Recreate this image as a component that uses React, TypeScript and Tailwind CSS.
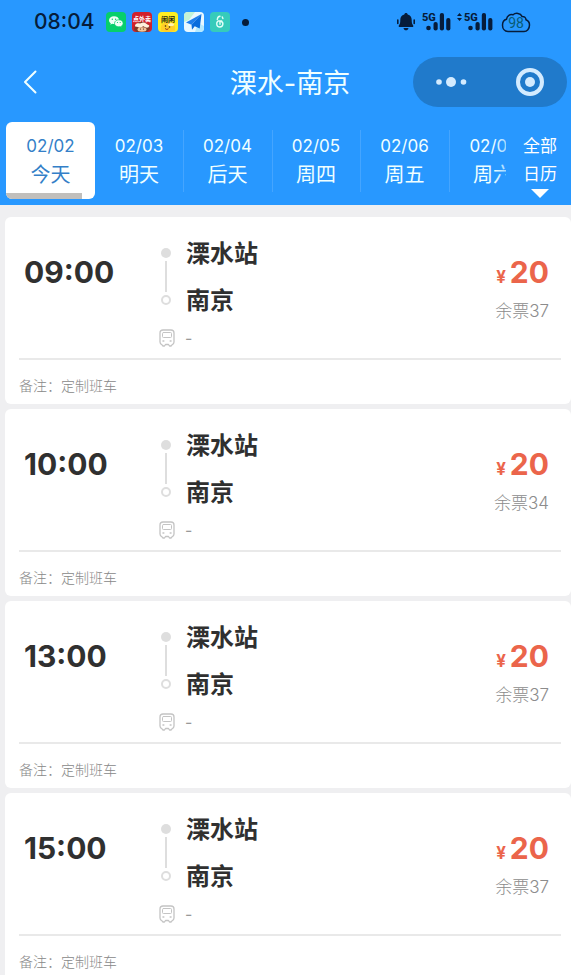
import React from "react";

type Day = { date: string; label: string };
type Trip = { time: string; from: string; to: string; price: number; left: number };

const days: Day[] = [
  { date: "02/02", label: "今天" },
  { date: "02/03", label: "明天" },
  { date: "02/04", label: "后天" },
  { date: "02/05", label: "周四" },
  { date: "02/06", label: "周五" },
  { date: "02/07", label: "周六" },
];

const trips: Trip[] = [
  { time: "09:00", from: "溧水站", to: "南京", price: 20, left: 37 },
  { time: "10:00", from: "溧水站", to: "南京", price: 20, left: 34 },
  { time: "13:00", from: "溧水站", to: "南京", price: 20, left: 37 },
  { time: "15:00", from: "溧水站", to: "南京", price: 20, left: 37 },
];

function AppIcons() {
  return (
    <div className="flex gap-[6px]">
      <svg width="20" height="20" viewBox="0 0 20 20">
        <rect width="20" height="20" rx="4" fill="#07cf6b" />
        <path d="M8 4.2c-2.9 0-5 1.7-5 4 0 1.300.7 2.300 1.800 3l-.5 1.600 1.900-1c.6.2 1.200.2 1.800.2 2.900 0 5-1.700 5-3.900S10.900 4.200 8 4.200z" fill="#effff5" />
        <path d="M12.800 7.800c-2.400 0-4.300 1.500-4.300 3.500s1.900 3.500 4.300 3.500c.5 0 1-.1 1.400-.2l1.600.9-.4-1.400c1-.7 1.700-1.600 1.700-2.800 0-2-1.900-3.500-4.300-3.500z" fill="#effff5" stroke="#07cf6b" strokeWidth=".7" />
        <circle cx="6.300" cy="7.200" r=".7" fill="#07cf6b" />
        <circle cx="9.600" cy="7.200" r=".7" fill="#07cf6b" />
        <circle cx="11.500" cy="10.500" r=".6" fill="#07cf6b" />
        <circle cx="14.200" cy="10.500" r=".6" fill="#07cf6b" />
      </svg>
      <svg width="20" height="20" viewBox="0 0 20 20">
        <rect width="20" height="20" rx="4" fill="#d2202c" />
        <path d="M2 18l1-5 4-3h5l5 3 1 4-3 3H5z" fill="#7d3929" />
        <path d="M3 13.500c1-3 4-2 5-2s4-2 6 0 4 1 3 3-4 1-5 0-3 2-5 1-4 0-4-2z" fill="#fff1dd" />
        <ellipse cx="10" cy="17.500" rx="4.500" ry="2.200" fill="#f4c69c" />
        <circle cx="8.500" cy="17" r=".6" fill="#402018" />
        <circle cx="11.500" cy="17" r=".6" fill="#402018" />
        <text x="10" y="8.500" textAnchor="middle" fontSize="6" fontWeight="700" fill="#fff">点外卖</text>
      </svg>
      <svg width="20" height="20" viewBox="0 0 20 20">
        <rect width="20" height="20" rx="4" fill="#ffee20" />
        <path d="M3 19c-1-6 2-9 7-9s8 3 7 9c-4 1.500-10 1.500-14 0z" fill="#ffcf27" />
        <ellipse cx="13" cy="12.500" rx="3" ry="1.600" fill="#fff3ae" />
        <text x="10" y="9.500" textAnchor="middle" fontSize="7" fontWeight="700" fill="#252512">闹闲</text>
        <circle cx="7.500" cy="14" r=".8" fill="#37230f" />
        <circle cx="11.500" cy="15" r=".8" fill="#37230f" />
        <path d="M7 16.500q2 2 3.500.2" stroke="#9a391d" fill="none" />
      </svg>
      <svg width="20" height="20" viewBox="0 0 20 20">
        <rect width="20" height="20" rx="4" fill="#e9f8ff" />
        <path d="M0 4a4 4 0 014-4h7L5 8l-5 2z" fill="#c3f3d6" />
        <path d="M11 20l3-9 6 3v2a4 4 0 01-4 4z" fill="#b4e9ff" />
        <path d="M17.500 2L2 10.500l5.500 2.200z" fill="#1f7fec" />
        <path d="M17.500 2L7.500 12.700l.5 5 2.700-3.500 5 2.300z" fill="#096ddd" />
      </svg>
      <svg width="20" height="20" viewBox="0 0 20 20" fill="none" stroke="#e5fff8" strokeWidth="1.400" strokeLinecap="round">
        <rect width="20" height="20" rx="4" fill="#36cbbb" stroke="none" />
        <path d="M7.500 9.500c-1.300 1.500-1.200 5.500 2.300 5.500s4-4.500 1.500-5.500M7.300 7.500c.2-2 1.200-3.200 2.700-3.200M12.300 5l.6 1.500M10 9.200v3M8.300 9h3.400" />
      </svg>
    </div>
  );
}

function StatusIcons() {
  return (
    <svg width="136" height="24" viewBox="0 0 136 24" fill="#061c3a" role="img" aria-label="5G 98%">
      <path d="M10 3c.9 0 1.500.6 1.700 1.400C14.500 5 15.700 7 15.700 10c0 3 .5 4.300 1.500 5.200V17H2.800v-1.800C3.800 14.300 4.300 13 4.300 10c0-3 1.200-5 4-5.600C8.500 3.600 9.100 3 10 3zM7.500 18h5c-.3 1.500-1.200 2.300-2.500 2.300S7.800 19.500 7.500 18z" />
      <path d="M1.800 10v3.500M18.200 10v3.500" stroke="#061c3a" strokeWidth="1.600" strokeLinecap="round" />
      <text x="26" y="11" fontFamily="Roboto, sans-serif" fontSize="11" fontWeight="800">5G</text>
      <circle cx="32.500" cy="18" r="2.300" />
      <rect x="37.500" y="12" width="4.200" height="8.500" rx="2" />
      <rect x="43.800" y="3" width="4.200" height="17.500" rx="2" />
      <rect x="50.200" y="8" width="4.200" height="12.500" rx="2" />
      <path d="M61 6l2.500-3L66 6zM61 8l2.500 3L66 8z" />
      <text x="68" y="11" fontFamily="Roboto, sans-serif" fontSize="11" fontWeight="800">5G</text>
      <circle cx="74.500" cy="18" r="2.300" />
      <rect x="79.500" y="12" width="4.200" height="8.500" rx="2" />
      <rect x="85.800" y="3" width="4.200" height="17.500" rx="2" />
      <rect x="92.200" y="8" width="4.200" height="12.500" rx="2" />
      <path d="M112 21.500c-3.500 0-5.500-3-5.500-6.200 0-3.300 1.500-5.500 4-6.100C111.200 5.500 114 4 117 4.800c2.500-2.300 7.500-2 9 1.600 2.300-.2 4 1.200 4 3.400 2.200.8 3.500 2.700 3.500 5.200 0 3.900-2.500 6.500-5.500 6.500z" fill="none" stroke="#061c3a" strokeWidth="1.500" />
      <text x="120" y="18" textAnchor="middle" fontFamily="Roboto, sans-serif" fontSize="14" fill="#075b75">98</text>
    </svg>
  );
}

function BusIcon() {
  return (
    <svg width="16" height="18" viewBox="0 0 16 18" fill="none" stroke="#c4c4c4" strokeWidth="1.300" strokeLinecap="round" strokeLinejoin="round">
      <path d="M4 1h8a3 3 0 013 3v9a3 3 0 01-2 2.800L12 17h-1.500l-1-1.500h-3L5.500 17H4l-1-1.200A3 3 0 011 13V4a3 3 0 013-3z" />
      <rect x="3.500" y="3.500" width="9" height="5" rx="1" strokeWidth="1" />
      <path d="M4 12h.8M11.200 12h.8" strokeWidth="1.500" />
    </svg>
  );
}

function TripCard({ trip }: { trip: Trip }) {
  return (
    <li className="rounded-md bg-white pr-[10px] pl-[14px]">
      <div className="flex border-b-2 border-[#e9e9e9] pt-[13px] pb-[6px] pr-3 pl-[5px]">
        <time className="w-[134px] pt-[22px] text-[30px] leading-10 font-bold text-[#303030]">{trip.time}</time>
        <div className="flex-1">
          <div className="flex">
            <div className="flex w-[28px] flex-col items-start pt-[18px] pl-[3px]">
              <div className="flex flex-col items-center gap-[3px]">
                <i className="size-[10px] rounded-full bg-[#dedede]" />
                <i className="h-[31px] w-[2px] bg-[#dedede]" />
                <i className="size-[10px] rounded-full border-2 border-[#dedede]" />
              </div>
            </div>
            <div className="text-2xl font-bold text-[#303030]">
              <p className="leading-[47px]">{trip.from}</p>
              <p className="leading-[47px]">{trip.to}</p>
            </div>
          </div>
          <div className="flex h-7 items-center gap-[10px] pl-[1px] text-base text-[#999]">
            <BusIcon />
            <span>-</span>
          </div>
        </div>
        <div className="pt-[22px] text-right">
          <p className="text-[30px] leading-10 font-bold text-[#eb654b]">
            <span className="mr-1 text-[17px]">¥</span>
            {trip.price}
          </p>
          <p className="text-[17px] leading-7 font-light text-[#8c8c8c]">余票{trip.left}</p>
        </div>
      </div>
      <p className="pt-2 text-sm leading-9 font-light text-[#888]">备注：定制班车</p>
    </li>
  );
}

export default function App() {
  return (
    <div className="flex h-screen flex-col overflow-hidden bg-[#efeff1] font-[Inter,'Noto_Sans_CJK_SC',sans-serif]">
      <header className="shrink-0 bg-[#2898ff] pb-[6px] text-[#f0ffff]">
        <div className="flex h-[42px] items-center pt-[2px] pr-[39px] pl-[34px] text-[#061c3a]">
          <time className="w-[72px] text-[21px] font-medium">08:04</time>
          <AppIcons />
          <i className="ml-3 size-[7px] rounded-full bg-[#061c3a]" />
          <div className="ml-auto">
            <StatusIcons />
          </div>
        </div>
        <div className="mt-[15px] flex h-[50px] items-center pr-1">
          <div className="w-[167px] pl-[22px]">
            <button aria-label="返回" className="block">
              <svg width="16" height="24" viewBox="0 0 16 24" fill="none" stroke="currentColor" strokeWidth="2" strokeLinecap="round" strokeLinejoin="round">
                <path d="M13.500 1.500L3 12l10.500 10.500" />
              </svg>
            </button>
          </div>
          <h1 className="flex-1 pt-1 text-center text-[27px]">溧水-南京</h1>
          <div className="flex h-full w-[154px] items-center justify-between rounded-full bg-[#207acb] px-[22px] text-[#d3ebff]">
            <button aria-label="更多">
              <svg width="32" height="12" viewBox="0 0 32 12" fill="currentColor">
                <circle cx="4" cy="6" r="2.800" />
                <circle cx="16" cy="6" r="5" />
                <circle cx="28.500" cy="6" r="2.800" />
              </svg>
            </button>
            <button aria-label="关闭">
              <svg width="30" height="30" viewBox="0 0 30 30" fill="none" stroke="currentColor" strokeWidth="4">
                <circle cx="15" cy="15" r="12" />
                <circle cx="15" cy="15" r="5" fill="currentColor" stroke="none" />
              </svg>
            </button>
          </div>
        </div>
        <nav className="mt-[15px] flex h-[77px] pl-[6px]">
          <div className="relative flex flex-1 overflow-hidden">
            {days.map((day, i) => (
              <React.Fragment key={day.date}>
                {i > 1 && <i className="-mr-px h-[62px] w-px shrink-0 self-center bg-[#45a5ff]" />}
                <button
                  className={
                    "flex shrink-0 flex-col items-center pt-[10px] " +
                    (i === 0 ? "relative w-[89px] overflow-hidden rounded-md bg-white text-[#347fc8]" : i % 2 ? "w-[88px]" : "w-[89px]")
                  }
                >
                  <span className="text-[17px] leading-7">{day.date}</span>
                  <span className="text-[20px] leading-[30px]">{day.label}</span>
                  {i === 0 && <i className="absolute bottom-0 left-0 h-[6px] w-[76px] bg-[#c1bfbc]" />}
                </button>
              </React.Fragment>
            ))}
            <i className="absolute inset-y-0 right-0 w-3 bg-linear-to-r from-transparent to-[#2898ff]/40" />
          </div>
          <button className="flex w-[65px] flex-col items-center pt-[10px] pl-[3px] text-[17px] leading-7 text-white">
            <span>全部</span>
            <span>日历</span>
            <svg className="mt-px" width="18" height="9" viewBox="0 0 18 9" fill="currentColor">
              <path d="M0 0h18L9 9z" />
            </svg>
          </button>
        </nav>
      </header>
      <main className="min-h-0 flex-1 overflow-y-auto pt-3 pl-[5px] [scrollbar-width:none]">
        <ul className="flex flex-col gap-[5px]">
          {trips.map((trip) => (
            <TripCard key={trip.time} trip={trip} />
          ))}
        </ul>
      </main>
    </div>
  );
}
